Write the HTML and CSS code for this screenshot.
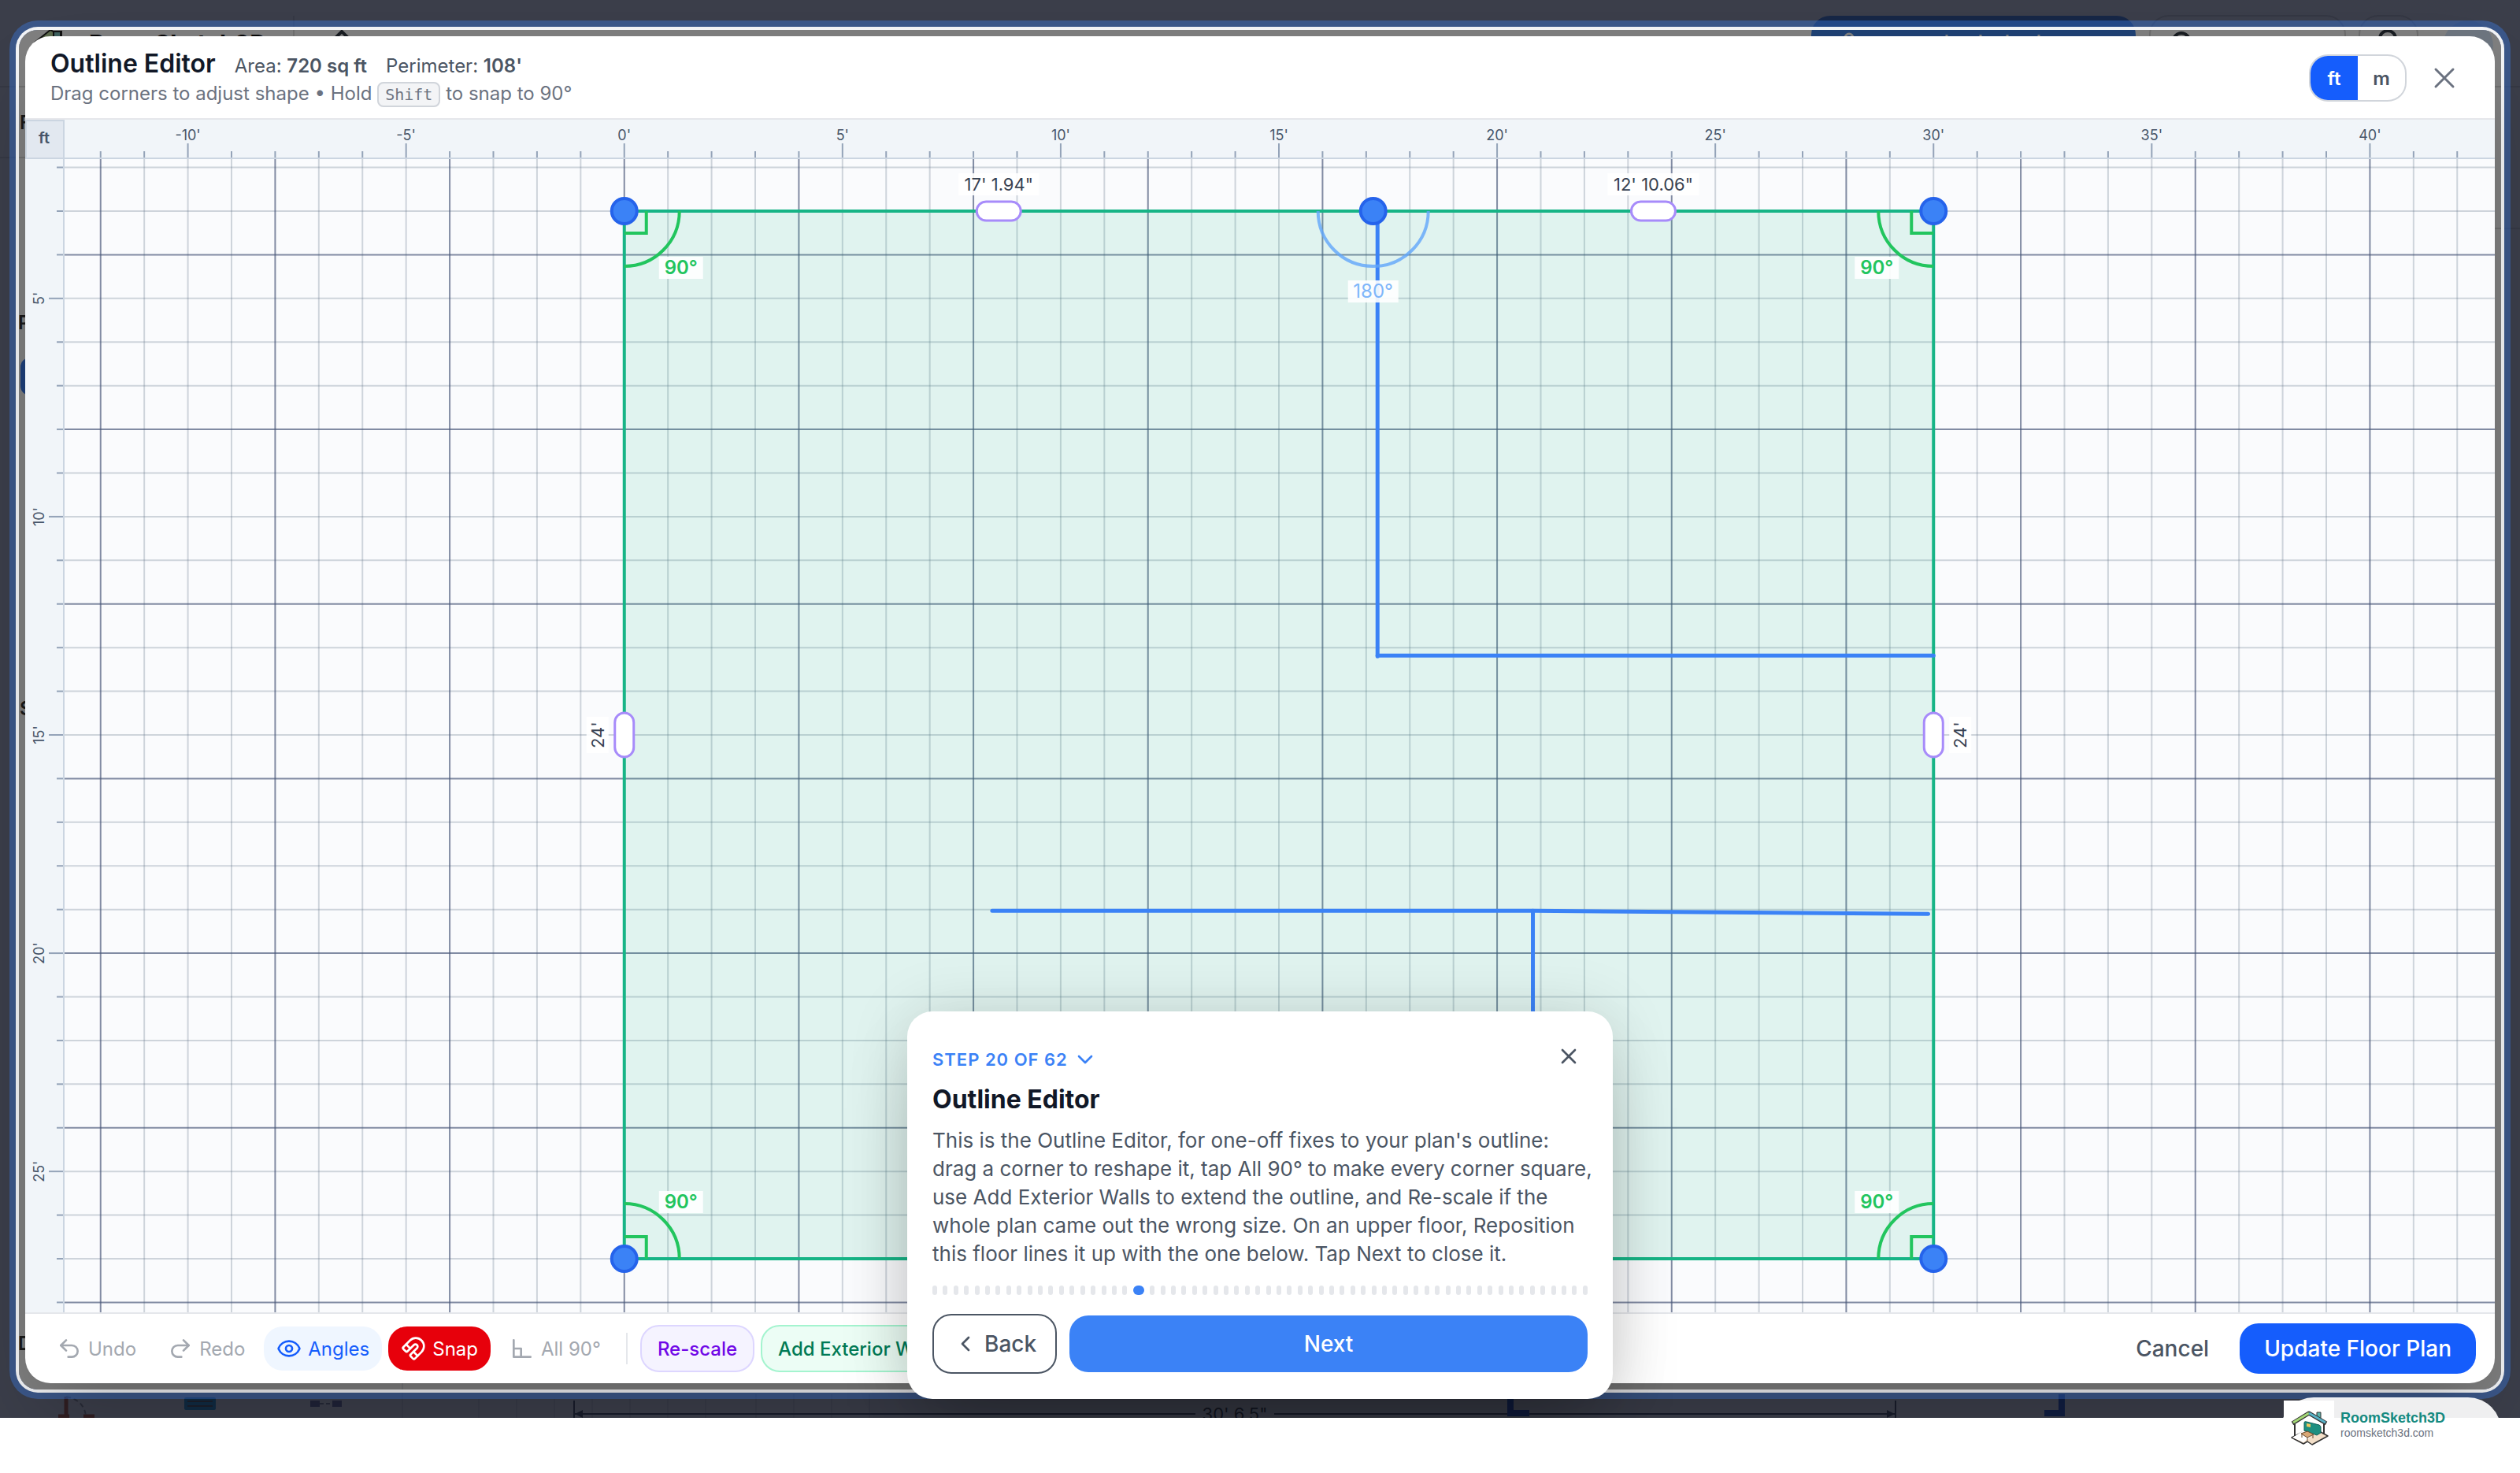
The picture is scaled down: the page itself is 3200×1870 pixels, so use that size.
FILE: index.html
```html
<!DOCTYPE html>
<html lang="en">
<head>
<meta charset="utf-8">
<title>RoomSketch3D - Outline Editor</title>
<link rel="stylesheet" href="styles.css">
</head>
<body>
<div class="stage">
  <!-- Dimmed planner behind the dialog -->
  <svg class="planner" aria-hidden="true">
    <g class="planner-top">
      <path d="M44 54 64 38 78 46V40h-8v10" fill="#b9d79a" stroke="#222" stroke-width="2"/>
      <path d="M68 40h9v14h-9z" fill="#7cc0bd" stroke="#222" stroke-width="2"/>
      <text x="113" y="66" class="planner-name">RoomSketch3D</text>
      <path d="M373 20v70M0 110h3200M3168 290h32M0 200h32" stroke="#dedede" stroke-width="2" fill="none"/>
      <path d="m420 54 14-14 14 14" stroke="#333a44" stroke-width="4" fill="none"/>
      <rect x="2300" y="20" width="412" height="60" rx="24" fill="#3f83e8"/>
      <circle cx="2348" cy="48" r="5" fill="none" stroke="#fff" stroke-width="3"/>
      <path d="M2472 44v4M2515 44v4M2549 44v4M2589 44v4" stroke="#fff" stroke-width="3"/>
      <rect x="2730" y="20" width="248" height="60" rx="24" fill="none" stroke="#d8d8d8" stroke-width="2"/>
      <circle cx="2770" cy="52" r="10" fill="none" stroke="#333a44" stroke-width="4"/>
      <rect x="2996" y="20" width="74" height="60" rx="24" fill="none" stroke="#d8d8d8" stroke-width="2"/>
      <circle cx="3032" cy="49" r="10" fill="none" stroke="#333a44" stroke-width="4"/>
      <circle cx="3134" cy="58" r="32" fill="#dbeafe"/>
    </g>
    <g class="planner-side">
      <text x="25" y="164">F</text>
      <text x="23" y="418">P</text>
      <rect x="26" y="454" width="40" height="48" rx="12" fill="#3b7df0"/>
      <text x="25" y="908">S</text>
      <text x="23" y="1714">D</text>
    </g>
    <g class="planner-bottom">
      <path d="M511 1740v60M960 1770v30M1008 1770v30M1056 1770v30M1104 1770v30M608 1776v24M656 1776v24M704 1776v24M752 1776v24M800 1776v24M848 1776v24M896 1776v24" stroke="#cfd5dd" stroke-width="1"/>
      <path d="M84 1773v27M74 1798h14M106 1798h14" stroke="#c2552d" stroke-width="5"/>
      <path d="M84 1773q22 4 25 24" fill="none" stroke="#999" stroke-width="2" stroke-dasharray="6 4"/>
      <rect x="234" y="1774" width="40" height="16" rx="2" fill="#1b9bd8"/>
      <path d="M238 1779h32M238 1785h32" stroke="#555" stroke-width="2"/>
      <path d="M394 1778h12v8h-12zM422 1778h12v8h-12z" fill="#6b72a0"/>
      <path d="M406 1782h16" stroke="#889" stroke-width="2" stroke-dasharray="5 3"/>
      <path d="M729 1778v22M730 1795h788M1618 1795h789M2407 1778v22" stroke="#444c5a" stroke-width="2"/>
      <path d="m730 1795 10-5v10zM2406 1795l-10-5v10z" fill="#444c5a"/>
      <text x="1568" y="1803" text-anchor="middle" class="planner-size">30' 6.5"</text>
      <path d="M1918 1774v20h24M2596 1794h22v-24" fill="none" stroke="#1d4fd0" stroke-width="8"/>
    </g>
  </svg>

  <div class="spotlight">
    <section class="editor" aria-labelledby="editor-title">
      <header class="editor-head">
        <div class="heading">
          <div class="heading-row">
            <h1 id="editor-title">Outline Editor</h1>
            <span class="stat">Area: <strong>720 sq ft</strong></span>
            <span class="stat">Perimeter: <strong>108'</strong></span>
          </div>
          <p class="hint">Drag corners to adjust shape • Hold <kbd>Shift</kbd> to snap to 90°</p>
        </div>
        <div class="units">
          <button type="button" class="unit is-on">ft</button>
          <button type="button" class="unit">m</button>
        </div>
        <button type="button" class="icon-btn" aria-label="Close editor">
          <svg class="icon" viewBox="0 0 32 32"><path d="M5 5l22 22M27 5 5 27"/></svg>
        </button>
      </header>

      <svg class="board" id="board" role="img" aria-label="Floor outline, 30 by 24 feet"></svg>

      <footer class="tools">
        <button type="button" class="tool" disabled>
          <svg class="icon" viewBox="0 0 24 24"><path d="M9 14 4 9l5-5"/><path d="M4 9h10.5a5.5 5.5 0 0 1 0 11H11"/></svg>Undo</button>
        <button type="button" class="tool" disabled>
          <svg class="icon" viewBox="0 0 24 24"><path d="m15 14 5-5-5-5"/><path d="M20 9H9.500a5.500 5.500 0 0 0 0 11H13"/></svg>Redo</button>
        <button type="button" class="tool tool-angles">
          <svg class="icon" viewBox="0 0 24 24"><path d="M2.062 12.348a1 1 0 0 1 0-.696 10.750 10.750 0 0 1 19.876 0 1 1 0 0 1 0 .696 10.750 10.750 0 0 1-19.876 0"/><circle cx="12" cy="12" r="3"/></svg>Angles</button>
        <button type="button" class="tool tool-snap">
          <svg class="icon" viewBox="0 0 24 24"><path d="m12 15 4 4"/><path d="M2.352 10.648a1.205 1.205 0 0 0 0 1.704l2.296 2.296a1.205 1.205 0 0 0 1.704 0l6.029-6.029a1 1 0 1 1 3 3l-6.029 6.029a1.205 1.205 0 0 0 0 1.704l2.296 2.296a1.205 1.205 0 0 0 1.704 0l6.365-6.367A1 1 0 0 0 8.716 4.282z"/><path d="m5 8 4 4"/></svg>Snap</button>
        <button type="button" class="tool" disabled>
          <svg class="icon" viewBox="0 0 24 24"><path d="M4 4v16h16M4 12h7v8"/></svg>All 90°</button>
        <span class="divider"></span>
        <button type="button" class="tool tool-rescale">Re-scale</button>
        <button type="button" class="tool tool-walls">Add Exterior Walls</button>
        <div class="confirm">
          <button type="button" class="btn-cancel">Cancel</button>
          <button type="button" class="btn-update">Update Floor Plan</button>
        </div>
      </footer>
    </section>
  </div>

  <section class="tour" role="dialog" aria-labelledby="tour-title">
    <div class="tour-top">
      <button type="button" class="tour-step">STEP 20 OF 62
        <svg class="icon" viewBox="0 0 24 24"><path d="m6 9 6 6 6-6"/></svg></button>
      <button type="button" class="tour-close" aria-label="Close tour">
        <svg class="icon" viewBox="0 0 24 24"><path d="M18 6 6 18M6 6l12 12"/></svg>
      </button>
    </div>
    <h2 id="tour-title">Outline Editor</h2>
    <p class="tour-text">This is the Outline Editor, for one-off fixes to your plan's outline:<br>
      drag a corner to reshape it, tap All 90° to make every corner square,<br>
      use Add Exterior Walls to extend the outline, and Re-scale if the<br>
      whole plan came out the wrong size. On an upper floor, Reposition<br>
      this floor lines it up with the one below. Tap Next to close it.</p>
    <div class="dots" id="dots"></div>
    <div class="tour-actions">
      <button type="button" class="btn-back"><svg class="icon" viewBox="0 0 24 24"><path d="m15 18-6-6 6-6"/></svg>Back</button>
      <button type="button" class="btn-next">Next</button>
    </div>
  </section>
</div>

<aside class="brand">
  <svg class="brand-logo" viewBox="0 0 64 64">
    <path d="M10 47 36 34 56 45 36 56 30 52 25 55z" fill="#f3dfc8" stroke="#333" stroke-width="1.500" stroke-linejoin="round"/>
    <path d="M11 47 25 38l12 6-12 9z" fill="#fff"/>
    <path d="M14 30v15M51 30v13" stroke="#333" stroke-width="2"/>
    <path d="M42 15h5v12l-5-4z" fill="#5bb5ae" stroke="#333"/>
    <path d="M11 29 32 16 54 29" fill="none" stroke="#333" stroke-width="5" stroke-linejoin="round"/>
    <path d="M12 28 32 16" stroke="#a5d977" stroke-width="3"/>
    <path d="M32 16 53 28" stroke="#58b3c9" stroke-width="3"/>
    <path d="M26 28q0-2 3-1l16 4q2 1 2 3v7l-5 3-16-6z" fill="#1e8f80" stroke="#146058"/>
    <path d="m29 29 5 1v4l-5-1z" fill="#f0c75e"/>
    <path d="m22 42 8-3 8 4-8 4z" fill="#d9a775" stroke="#6b4a2c"/>
    <path d="M23 43v4M30 47v4M37 44v4" stroke="#6b4a2c"/>
  </svg>
  <div class="brand-text">
    <span class="brand-name">RoomSketch3D</span>
    <span class="brand-url">roomsketch3d.com</span>
  </div>
</aside>
<script src="board.js"></script>
</body>
</html>
```
FILE: styles.css
```css
* { box-sizing: border-box; }

body {
  margin: 0;
  position: relative;
  min-height: 100vh;
  background: #fff;
  color: #4b5563;
  font-family: Inter, "Liberation Sans", sans-serif;
}

button {
  margin: 0;
  padding: 0;
  border: 0;
  background: none;
  color: inherit;
  font: inherit;
}

h1, h2, p { margin: 0; }

.stage {
  position: relative;
  display: flex;
  height: calc(100vh - 70px);
  padding: 38px 24px 36px;
  overflow: hidden;
  background: #fff;
}

.planner {
  position: absolute;
  inset: 0;
  width: 100%;
  height: 100%;
}
.planner-name { font-size: 30px; font-weight: 700; fill: #111; }
.planner-side text { font-size: 24px; font-weight: 600; fill: #333; }
.planner-size { font-size: 22px; fill: #333; }

.spotlight {
  position: relative;
  display: flex;
  flex: 1;
  min-width: 0;
  padding: 8px;
  border-radius: 24px;
  background: rgba(0, 0, 0, .5);
  box-shadow:
    0 0 0 4px #f3f4f6,
    0 0 0 12px rgba(59, 130, 246, .37),
    0 0 0 2000px rgba(13, 17, 32, .81);
}

.editor {
  display: flex;
  flex: 1;
  flex-direction: column;
  min-width: 0;
  overflow: hidden;
  border-radius: 32px;
  background: #fff;
  box-shadow: 0 50px 100px -24px rgba(0, 0, 0, .25);
}

.icon {
  width: 32px;
  height: 32px;
  fill: none;
  stroke: currentColor;
  stroke-width: 2;
  stroke-linecap: round;
  stroke-linejoin: round;
}

/* Header */
.editor-head {
  display: flex;
  align-items: center;
  height: 106px;
  padding: 2px 44px 0 32px;
  border-bottom: 2px solid #e5e7eb;
}
.heading { flex: 1; }
.heading-row { display: flex; align-items: baseline; gap: 24px; }
.heading h1 { font-size: 32px; line-height: 40px; font-weight: 600; color: #111827; }
.stat { font-size: 24px; line-height: 32px; color: #4b5563; }
.stat strong { font-weight: 600; }
.hint { font-size: 24px; line-height: 36px; color: #6b7280; }
kbd {
  padding: 2px 8px;
  border: 2px solid #d1d5db;
  border-radius: 8px;
  background: #f3f4f6;
  font-family: "DejaVu Sans Mono", monospace;
  font-size: 20px;
}
.units {
  display: flex;
  height: 60px;
  margin-right: 28px;
  overflow: hidden;
  border: 2px solid #d1d5db;
  border-radius: 24px;
}
.unit { width: 60px; font-size: 24px; font-weight: 600; }
.unit.is-on { background: #155dfc; color: #fff; }
.icon-btn { display: flex; padding: 4px; color: #6b7280; }
.icon-btn .icon { stroke-width: 3; }

/* Drawing board */
.board {
  display: block;
  flex: 1;
  width: 100%;
  min-height: 0;
  background: #fafbfd;
}
.ruler { fill: #f1f5f9; }
.ruler-corner { fill: #e2e8f0; }
.ruler-edge { stroke: #cbd5e1; stroke-width: 2; fill: none; }
.tick { stroke: #94a3b8; stroke-width: 2; }
.ruler-label { font-size: 18px; fill: #475569; text-anchor: middle; }
.ruler-unit { font-size: 20px; font-weight: 600; fill: #475569; text-anchor: middle; }
.grid-minor { stroke: rgba(100, 116, 139, .29); stroke-width: 2; }
.grid-major { stroke: rgba(71, 85, 119, .68); stroke-width: 2; }
.outline { fill: rgba(16, 185, 129, .11); stroke: #17b486; stroke-width: 4; }
.inner-wall { fill: none; stroke: #3b82f6; stroke-width: 5; stroke-linecap: round; }
.square { fill: none; stroke: #22c55e; stroke-width: 4; }
.straight { fill: none; stroke: #60a5fa; stroke-width: 4; opacity: .8; }
.tag { fill: rgba(255, 255, 255, .9); }
.tag-size { font-size: 22px; fill: #374151; text-anchor: middle; }
.tag-square { font-size: 24px; font-weight: 600; fill: #22c55e; text-anchor: middle; }
.tag-straight { font-size: 24px; fill: #60a5fa; text-anchor: middle; opacity: .8; }
.vertex { fill: #3b82f6; stroke: #2563eb; stroke-width: 4; }
.handle { fill: #fff; stroke: #a78bfa; stroke-width: 3; }

/* Toolbar */
.tools {
  display: flex;
  align-items: center;
  gap: 8px;
  height: 90px;
  padding: 0 24px;
  border-top: 2px solid #e5e7eb;
  white-space: nowrap;
}
.tool {
  display: flex;
  align-items: center;
  gap: 8px;
  height: 56px;
  padding: 0 16px;
  border-radius: 24px;
  font-size: 24px;
}
.tool:disabled { color: #a3a8b0; }
.tool-angles { background: #eff6ff; color: #155dfc; }
.tool-snap { background: #e7000b; color: #fff; }
.tool-rescale, .tool-walls { height: 60px; padding: 0 20px; border: 2px solid; font-weight: 500; }
.tool-rescale { border-color: #ddd6ff; background: #f5f3ff; color: #7008e7; }
.tool-walls { border-color: #a4f4cf; background: #ecfdf5; color: #007a55; }
.divider { width: 2px; height: 40px; margin: 0 8px; background: #e5e7eb; }
.confirm { display: flex; gap: 8px; margin-left: auto; }
.btn-cancel, .btn-update {
  height: 64px;
  padding: 0 31px;
  border-radius: 24px;
  font-size: 28px;
  font-weight: 500;
}
.btn-update { background: #155dfc; color: #fff; }

/* Guided tour card */
.tour {
  position: absolute;
  bottom: 24px;
  left: 50%;
  width: 896px;
  padding: 32px;
  border-radius: 32px;
  transform: translateX(-50%);
  background: #fff;
  box-shadow: 0 50px 100px -24px rgba(0, 0, 0, .25), 0 0 80px rgba(0, 0, 0, .12);
}
.tour-top { display: flex; justify-content: space-between; align-items: center; height: 58px; }
.tour-step {
  display: flex;
  align-items: center;
  gap: 6px;
  color: #3b82f6;
  font-size: 22px;
  font-weight: 600;
  letter-spacing: 1px;
}
.tour-close { display: flex; padding: 0 8px; margin-bottom: 8px; color: #4b5563; }
.tour h2 { font-size: 32px; line-height: 44px; font-weight: 700; color: #111827; }
.tour-text { margin: 12px -16px 0 0; font-size: 26px; line-height: 36px; }
.dots { display: flex; justify-content: space-between; margin: 22px 0 24px; }
.dot { width: 6px; height: 12px; border-radius: 3px; background: #e5e7eb; }
.dot.is-on { width: 14px; border-radius: 6px; background: #3b82f6; }
.tour-actions { display: flex; align-items: center; gap: 16px; }
.btn-back, .btn-next { border-radius: 24px; font-size: 28px; font-weight: 500; }
.btn-back {
  display: flex;
  align-items: center;
  gap: 8px;
  height: 76px;
  padding: 0 24px;
  border: 2px solid #4b5563;
}
.btn-next { flex: 1; height: 72px; background: #3b82f6; color: #fff; }

/* Brand badge */
.brand {
  position: absolute;
  right: 24px;
  bottom: 12px;
  display: flex;
  gap: 8px;
  width: 280px;
  height: 84px;
  padding: 4px;
  border-radius: 42px;
  background: rgba(255, 255, 255, .92);
  font-family: "Liberation Sans", sans-serif;
}
.brand-logo { width: 64px; height: 64px; background: #fff; }
.brand-text { display: flex; flex-direction: column; padding-top: 12px; }
.brand-name { font-size: 18px; line-height: 20px; font-weight: 700; color: #158a80; }
.brand-url { font-size: 14px; line-height: 18px; color: #6b7280; }
```
FILE: board.js
```js
const NS = "http://www.w3.org/2000/svg";
const board = document.getElementById("board");

// Outline of the floor in feet, and the walls inside it
const RULER = 48;
const TOP = 3, WIDTH = 30, HEIGHT = 24, SPLIT = 17.16;
const walls = [
  [[17.26, 3], [17.26, 13.2]],
  [[17.26, 13.18], [30, 13.18]],
  [[8.43, 19.03], [20.82, 19.03], [29.88, 19.1]],
  [[20.82, 19.03], [20.82, 27]]
];

function add(tag, attrs, text) {
  const el = document.createElementNS(NS, tag);
  for (const key in attrs) el.setAttribute(key, attrs[key]);
  if (text !== undefined) el.textContent = text;
  board.appendChild(el);
}

function line(cls, x1, y1, x2, y2) {
  add("line", { class: cls, x1, y1, x2, y2 });
}

function tag(cls, text, x, y, width, turned) {
  const transform = turned ? `rotate(-90 ${x} ${y})` : "";
  add("rect", { class: "tag", x: x - width / 2, y: y - 14, width, height: 28, transform });
  add("text", { class: cls, x, y: y + 8, transform }, text);
}

function draw() {
  board.textContent = "";
  const W = board.clientWidth, H = board.clientHeight;
  const ft = (H - RULER - 136) / HEIGHT;
  const left = (RULER + W - WIDTH * ft) / 2;
  const top = (RULER + H - HEIGHT * ft) / 2;
  const px = x => left + x * ft;
  const py = y => top + (y - TOP) * ft;
  const firstX = Math.ceil((RULER + 2 - left) / ft), lastX = Math.floor((W - left) / ft);
  const firstY = Math.ceil((RULER + 2 - top) / ft) + TOP, lastY = Math.floor((H - top) / ft) + TOP;

  for (const major of [false, true]) {
    const cls = major ? "grid-major" : "grid-minor";
    for (let x = firstX; x <= lastX; x++) if ((x % 4 === 0) === major) line(cls, px(x), RULER, px(x), H);
    for (let y = firstY; y <= lastY; y++) if ((y % 4 === 0) === major) line(cls, RULER, py(y), W, py(y));
  }

  const L = px(0), R = px(WIDTH), T = py(TOP), B = py(TOP + HEIGHT), M = px(SPLIT);
  add("rect", { class: "outline", x: L, y: T, width: R - L, height: B - T });
  for (const w of walls) {
    add("polyline", { class: "inner-wall", points: w.map(p => px(p[0]) + "," + py(p[1])).join(" ") });
  }

  // Corner angles
  for (const [x, y, dx, dy] of [[L, T, 1, 1], [R, T, -1, 1], [L, B, 1, -1], [R, B, -1, -1]]) {
    const sweep = dx * dy > 0 ? 1 : 0;
    add("path", { class: "square", d: `M${x + 70 * dx} ${y}A70 70 0 0 ${sweep} ${x} ${y + 70 * dy}M${x + 28 * dx} ${y}v${28 * dy}h${-28 * dx}` });
    tag("tag-square", "90°", x + 72 * dx, y + 72 * dy, 56);
  }
  add("path", { class: "straight", d: `M${M - 70} ${T}A70 70 0 0 0 ${M + 70} ${T}` });
  tag("tag-straight", "180°", M, T + 102, 64);

  // Side lengths with their drag handles
  const C = (T + B) / 2;
  tag("tag-size", "17' 1.94\"", (L + M) / 2, T - 34, 102);
  tag("tag-size", "12' 10.06\"", (M + R) / 2, T - 34, 116);
  tag("tag-size", "24'", L - 34, C, 46, true);
  tag("tag-size", "24'", R + 34, C, 46, true);
  for (const x of [(L + M) / 2, (M + R) / 2]) {
    add("rect", { class: "handle", x: x - 28, y: T - 12, width: 56, height: 24, rx: 12 });
  }
  for (const x of [L, R]) {
    add("rect", { class: "handle", x: x - 12, y: C - 28, width: 24, height: 56, rx: 12 });
  }
  for (const [x, y] of [[L, T], [M, T], [R, T], [L, B], [R, B]]) {
    add("circle", { class: "vertex", cx: x, cy: y, r: 16 });
  }

  // Rulers
  add("rect", { class: "ruler", x: 0, y: 0, width: W, height: RULER });
  add("rect", { class: "ruler", x: 0, y: 0, width: RULER, height: H });
  for (let x = firstX; x <= lastX; x++) {
    const labelled = x % 5 === 0;
    line("tick", px(x), labelled ? 30 : 40, px(x), RULER);
    if (labelled) add("text", { class: "ruler-label", x: px(x), y: 26 }, x + "'");
  }
  for (let y = firstY; y <= lastY; y++) {
    const labelled = y % 5 === 0;
    line("tick", labelled ? 30 : 40, py(y), RULER, py(y));
    if (labelled) add("text", { class: "ruler-label", x: 18, y: py(y) + 6, transform: `rotate(-90 18 ${py(y)})` }, y + "'");
  }
  add("rect", { class: "ruler-corner", x: 0, y: 0, width: RULER, height: RULER });
  add("path", { class: "ruler-edge", d: `M0 49H${W}M49 0V${H}M1 50V1H49` });
  add("text", { class: "ruler-unit", x: 24, y: 30 }, "ft");
}

const dots = document.getElementById("dots");
for (let step = 1; step <= 62; step++) {
  const dot = document.createElement("span");
  dot.className = step === 20 ? "dot is-on" : "dot";
  dots.appendChild(dot);
}

draw();
window.addEventListener("resize", draw);
```
